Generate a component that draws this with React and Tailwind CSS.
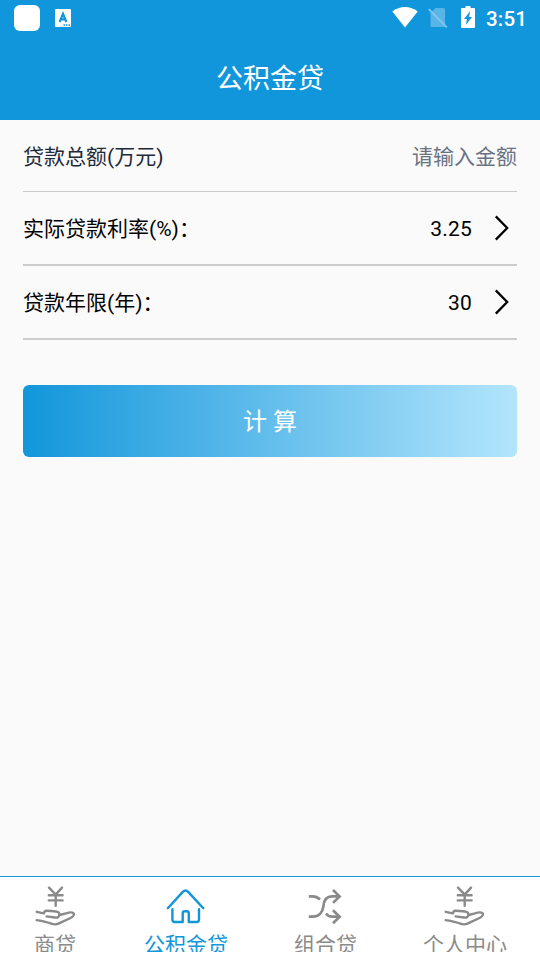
import { useState } from 'react';

const HandCoinIcon = ({ className = '' }) => (
  <svg className={`shrink-0 ${className}`} width="42" height="42" viewBox="0 0 42 42" fill="none" stroke="currentColor" strokeWidth="2.4" strokeLinecap="round" strokeLinejoin="round">
    <path d="M15 2.6 21.7 9.6 28 2.6M21.7 10V20.8M14.8 10.2H28.6M14.8 15.4H28.6" />
    <path d="M2.7 26.8 9.8 28.3C10.4 26.2 11.2 25.6 12.6 25.7L20 26.3C23.5 26.6 25.4 27.2 25.4 29.2C25.4 31.8 24 32.9 21 32.5L12.6 31.4" />
    <path d="M25.6 30 32 28.3C35 27.3 39.6 26.6 39.9 29C40.1 30.6 38.4 32 36 33.2L25 38.4C21.5 40 20.3 39.8 17.5 38.7C14 37.3 7 35.8 2.7 35.1" />
  </svg>
);

const HouseIcon = () => (
  <svg className="shrink-0" width="42" height="42" viewBox="0 0 42 42" fill="none" stroke="currentColor" strokeWidth="2.4" strokeLinecap="round" strokeLinejoin="round">
    <path d="M2.8 23.2 17.8 6.9Q20.5 4.2 23.2 6.9L38.3 23.2" />
    <path d="M7.4 24.2V34.6Q7.4 37 9.8 37H17.7V28.4Q17.7 26.3 19.8 26.3H21.7Q23.8 26.3 23.8 28.4V37H31.6Q34 37 34 34.6V24.2" />
  </svg>
);

const ShuffleIcon = ({ className = '' }) => (
  <svg className={`shrink-0 ${className}`} width="42" height="42" viewBox="0 0 42 42" fill="none" stroke="currentColor" strokeWidth="2.7">
    <path d="M5.8 11.4H9.5C12.5 11.4 15 12.5 17 14.5" />
    <path d="M5.8 31.7H9.5C16 31.7 19.7 27.5 20.3 21.5C20.8 15.5 23 11.4 29 11.4H36" />
    <path d="M23 28.6C24.5 30.8 26.5 31.7 29 31.7H36" />
    <path d="M30 5 36.6 11.4 30 17.9M30 25.2 36.6 31.7 30 38.2" />
  </svg>
);

const ChevronIcon = () => (
  <svg width="16" height="26" viewBox="0 0 16 26" fill="none" stroke="black" strokeWidth="2.3">
    <path d="M1.8 1.4 13.2 13 1.8 24.6" />
  </svg>
);

const tabs = [
  { id: 'business', label: '商贷', Icon: HandCoinIcon, width: 'w-[110px]' },
  { id: 'fund', label: '公积金贷', Icon: HouseIcon, width: 'w-[152px]' },
  { id: 'combo', label: '组合贷', Icon: ShuffleIcon, width: 'w-[127px]', iconClass: 'mr-[3px]' },
  { id: 'profile', label: '个人中心', Icon: HandCoinIcon, width: 'w-[152px]', iconClass: 'mr-[3px]' },
];

const StatusBar = () => (
  <div className="flex h-9 items-center justify-between pl-3.5 pr-3 text-white">
    <div className="flex items-center">
      <div className="h-[26px] w-[26px] rounded-md bg-white" />
      <svg className="ml-[15px]" width="16" height="18" viewBox="0 0 16 18">
        <rect width="16" height="18" rx="1" fill="white" />
        <path d="M4.6 13 8 4.8 11.4 13M5.8 10.4H10.2" fill="none" stroke="#1296db" strokeWidth="2.2" />
        <path d="M8.5 16H15" stroke="#1296db" strokeWidth="1.4" strokeDasharray="1.5 1" />
      </svg>
    </div>
    <div className="flex items-center">
      <svg className="mb-0.5" width="26" height="22" viewBox="0 0 26 22" fill="white">
        <path d="M13 21.5.3 5.5C7.5-.5 18.5-.5 25.7 5.5Z" />
      </svg>
      <svg className="ml-2.5" width="20" height="22" viewBox="0 0 20 22">
        <path d="M7.5 1H15.5Q17 1 17 2.5V18.5Q17 20 15.5 20H4Q2.5 20 2.5 18.5V6Z" fill="white" opacity=".3" />
        <path d="M.8 2.2 18.8 20.4" stroke="#82c8ef" strokeWidth="1.8" />
      </svg>
      <svg className="mb-0.5 ml-[13px]" width="14" height="22" viewBox="0 0 14 22">
        <path d="M4.5 0H9.5V2H13Q14 2 14 3V21Q14 22 13 22H1Q0 22 0 21V3Q0 2 1 2H4.5Z" fill="white" />
        <path d="M9.2 5 3 13H6L4.8 19 11 11H8Z" fill="#1296db" />
      </svg>
      <span className="ml-[11px] w-[42px] pt-0.5 text-[20.5px] leading-none font-medium tracking-[0.2px]">3:51</span>
    </div>
  </div>
);

const SelectRow = ({ label, value }) => (
  <div className="flex h-[74px] items-center justify-between border-b-2 border-[#cccccc] text-black">
    <span className="pt-1">{label}</span>
    <button className="flex items-center gap-[22px] pr-[7px]">
      <span className="pt-1 tracking-[0.2px]">{value}</span>
      <ChevronIcon />
    </button>
  </div>
);

const App = () => {
  const [amount, setAmount] = useState('');
  const [activeTab, setActiveTab] = useState('fund');

  return (
    <div className="flex h-screen flex-col overflow-hidden bg-[#fafafa] font-[Roboto,'Noto_Sans_CJK_SC',sans-serif] text-[21px]">
      <header className="h-[120px] bg-[#1296db]">
        <StatusBar />
        <h1 className="flex h-[84px] items-center justify-center pt-0.5 text-[27px] text-white">公积金贷</h1>
      </header>

      <main className="flex-1 px-[23px]">
        <div className="flex h-[72px] items-center justify-between border-b border-[#cccccc] pt-[5px]">
          <label htmlFor="amount" className="text-gray-800">贷款总额(万元)</label>
          <input
            id="amount"
            type="text"
            placeholder="请输入金额"
            value={amount}
            onChange={(e) => setAmount(e.target.value)}
            className="w-48 text-right placeholder-gray-500 focus:outline-none"
          />
        </div>
        <SelectRow label="实际贷款利率(%)：" value="3.25" />
        <SelectRow label="贷款年限(年)：" value="30" />
        <button className="mt-[45px] h-[72px] w-full rounded-md bg-[linear-gradient(to_right,#1296db,#b3e5fc)] pt-0.5 text-2xl text-white">
          计 算
        </button>
      </main>

      {/* Bottom tab bar */}
      <nav className="h-[84px] border-t border-[#1296db] bg-white">
        <div className="flex h-[75px] overflow-hidden">
          {tabs.map(({ id, label, Icon, width, iconClass }) => (
            <button
              key={id}
              onClick={() => setActiveTab(id)}
              className={`flex shrink-0 flex-col items-center pt-2 ${width} ${activeTab === id ? 'text-[#1296db]' : 'text-[#8a8a8a]'}`}
            >
              <Icon className={iconClass} />
              <span className="mt-0.5 leading-8 whitespace-nowrap">{label}</span>
            </button>
          ))}
        </div>
      </nav>
    </div>
  );
};

export default App;
